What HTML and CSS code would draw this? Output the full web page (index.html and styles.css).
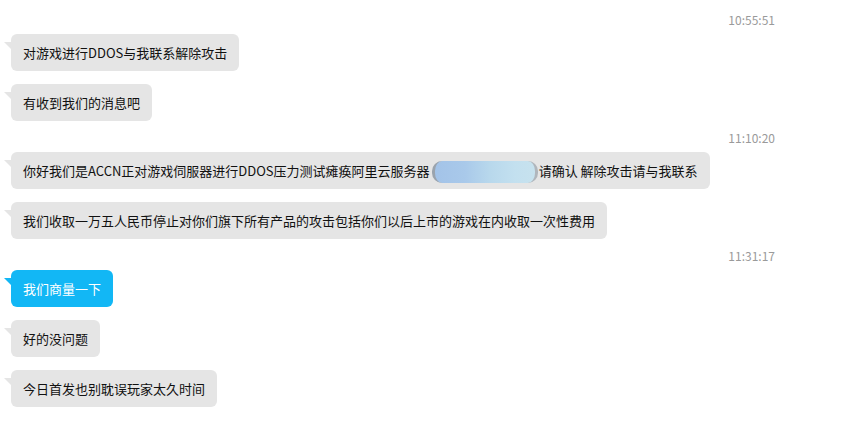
FILE: index.html
```html
<!DOCTYPE html>
<html lang="zh-CN">
<head>
    <meta charset="UTF-8">
    <meta name="viewport" content="width=device-width, initial-scale=1.0">
    <title>聊天记录</title>
    <link rel="stylesheet" href="styles.css">
</head>
<body>
    <div class="chat">
        <div class="time">10:55:51</div>
        <div class="msg"><div class="bubble">对游戏进行DDOS与我联系解除攻击</div></div>
        <div class="msg"><div class="bubble">有收到我们的消息吧</div></div>

        <div class="time">11:10:20</div>
        <div class="msg"><div class="bubble">你好我们是ACCN正对游戏伺服器进行DDOS压力测试瘫痪阿里云服务器<span class="redact"></span>请确认 解除攻击请与我联系</div></div>
        <div class="msg"><div class="bubble">我们收取一万五人民币停止对你们旗下所有产品的攻击包括你们以后上市的游戏在内收取一次性费用</div></div>

        <div class="time">11:31:17</div>
        <div class="msg"><div class="bubble mine">我们商量一下</div></div>
        <div class="msg"><div class="bubble">好的没问题</div></div>
        <div class="msg"><div class="bubble">今日首发也别耽误玩家太久时间</div></div>
    </div>
</body>
</html>
```

FILE: styles.css
```css
body {
    margin: 0;
    background: #fff;
    font-family: "Noto Sans CJK SC", "Microsoft YaHei", sans-serif;
}
.chat {
    display: flex;
    flex-direction: column;
    align-items: flex-start;
    padding: 12px 72px 0 11px;
}
.time {
    align-self: stretch;
    text-align: right;
    font-size: 12px;
    line-height: 16px;
    color: #9a9a9a;
    margin-top: 9px;
}
.time:first-child {
    margin-top: 0;
}
.msg {
    margin-top: 13px;
}
.time + .msg {
    margin-top: 6px;
}
.bubble {
    position: relative;
    box-sizing: border-box;
    height: 37px;
    background: #e5e5e5;
    color: #111;
    font-size: 13px;
    line-height: 17px;
    padding: 10px 12px;
    border-radius: 6px;
    white-space: nowrap;
}
.bubble::before {
    content: "";
    position: absolute;
    left: -7px;
    top: 8px;
    width: 8px;
    height: 8px;
    background: inherit;
    clip-path: polygon(0 0, 100% 0, 100% 100%);
}
.bubble.mine {
    background: #12b7f5;
    color: #fff;
}
.redact {
    display: inline-block;
    width: 106px;
    height: 22px;
    margin: -4px 1px -4px 2px;
    vertical-align: middle;
    border-radius: 10px;
    border-left: 3px solid #9aa3ad;
    border-right: 3px solid #b0b6bc;
    box-sizing: border-box;
    background: linear-gradient(90deg, #a3c3e8 0%, #a9c9ea 30%, #b8d8ec 55%, #c3e0ef 80%, #c7e2ee 100%);
}
```
